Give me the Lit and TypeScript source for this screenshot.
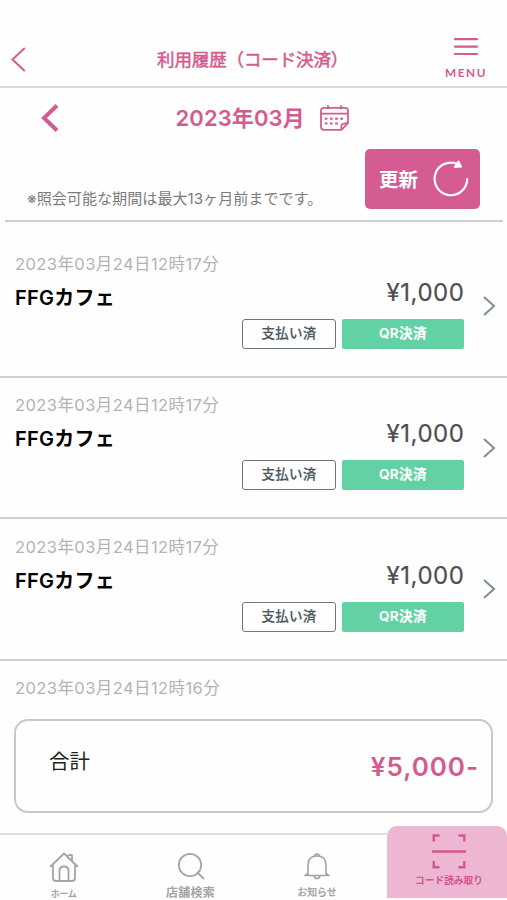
import { LitElement, html, css, svg } from "lit";
import { customElement } from "lit/decorators.js";

interface Payment {
  date: string;
  shop: string;
  amount: string;
}

const payments: Payment[] = [
  { date: "2023年03月24日12時17分", shop: "FFGカフェ", amount: "¥1,000" },
  { date: "2023年03月24日12時17分", shop: "FFGカフェ", amount: "¥1,000" },
  { date: "2023年03月24日12時17分", shop: "FFGカフェ", amount: "¥1,000" },
];

const calendarDots = [
  [4.8, 13.6], [10, 13.6], [15.2, 13.6], [20.4, 13.6],
  [4.8, 18.4], [10, 18.4], [15.2, 18.4],
];

@customElement("app-root")
export class AppRoot extends LitElement {
  static styles = css`
    :host {
      display: flex;
      flex-direction: column;
      width: 507px;
      height: 900px;
      overflow: hidden;
      background: #fefefe;
      color: #000;
      font-family: Inter, "Noto Sans CJK JP", sans-serif;
      line-height: 1;
      white-space: nowrap;
    }
    * { box-sizing: border-box; }
    svg { display: block; fill: none; flex: none; }
    .header {
      height: 88px;
      flex: none;
      padding: 36px 20px 0 11px;
      border-bottom: 2px solid #d9dadb;
      display: grid;
      grid-template-columns: 60px 1fr 43px;
      color: #d45b90;
    }
    .back { margin-top: 11px; }
    .title {
      font-size: 17.5px;
      font-weight: 400;
      padding: 14px 0 0 86px;
      font-family: "Noto Sans CJK JP", sans-serif;
      letter-spacing: -0.12px;
      -webkit-text-stroke: 0.5px currentColor;
    }
    .menu { display: flex; flex-direction: column; align-items: center; }
    .menu span {
      margin-top: 11px;
      font: 700 11.8px/12px Lato, sans-serif;
      letter-spacing: 1.5px;
      margin-right: -1px;
    }
    .month { height: 60px; flex: none; display: flex; align-items: center; color: #d45b90; padding-left: 40px; }
    .month .label { font-size: 22px; font-weight: 600; margin-left: 115.5px; width: 130.5px; letter-spacing: 0.1px; }
    .month .cal { margin-left: 14px; }
    .notice {
      height: 74px;
      flex: none;
      margin: 0 4px 0 5px;
      border-bottom: 2px solid #cfcfcf;
      display: flex;
      justify-content: space-between;
      padding: 1px 23px 0 22px;
    }
    .notice p { margin: 42px 0 0; font-size: 15.1px; color: #7b7b7b; }
    .refresh {
      width: 115px;
      height: 60px;
      border-radius: 5px;
      background: #d55c93;
      color: #fff;
      display: flex;
      align-items: center;
      justify-content: space-between;
      padding: 0 11px 0 14px;
      font-size: 19.5px;
      font-weight: 600;
    }
    .refresh span { margin-top: 3px; }
    .list { flex: none; padding-top: 14px; }
    .row {
      height: 141.6px;
      border-bottom: 2px solid #d0d0d0;
      display: grid;
      grid-template-columns: 1fr auto 43px;
      padding: 18.6px 0 0 15px;
    }
    .date { font-size: 16.5px; color: #b3b3b3; line-height: 18px; letter-spacing: 0.42px; }
    .shop { font-size: 20px; font-weight: 600; margin-top: 15px; line-height: 20px; letter-spacing: 0.25px; }
    .pay { padding-top: 24px; display: flex; flex-direction: column; align-items: flex-end; }
    .amount { font-size: 24px; line-height: 28px; color: #4e4e4e; letter-spacing: 0.55px; margin-right: -0.5px; -webkit-text-stroke: 0.2px currentColor; }
    .tags { display: flex; gap: 6px; margin-top: 12px; }
    .tag {
      height: 30px;
      border-radius: 2px;
      font-size: 13.5px;
      font-weight: 500;
      display: flex;
      align-items: center;
      justify-content: center;
      -webkit-text-stroke: 0.2px currentColor;
    }
    .paid { width: 94px; border: 1.5px solid #6c7a7d; color: #4c5a5e; background: #fff; border-radius: 3px; letter-spacing: 0.3px; }
    .qr { width: 122px; background: #62d1a3; color: #fff; font-weight: 600; letter-spacing: 0.5px; }
    .arrow { margin: 40.5px 0 0 17.5px; }
    .partial { padding: 18px 15px 0; height: 58.5px; flex: none; }
    .total {
      flex: none;
      height: 94px;
      margin: 0 14px 0 14px;
      border: 2px solid #c8c8c8;
      border-radius: 14px;
      display: flex;
      justify-content: space-between;
      padding: 31px 12px 0 33px;
    }
    .total .name { font-size: 20.5px; color: #222; }
    .total .sum { font-size: 26px; font-weight: 600; color: #d45b90; margin-top: 2px; letter-spacing: 0.95px; }
    .tabs {
      margin-top: 12.5px;
      height: 74px;
      flex: none;
      display: grid;
      grid-template-columns: 127px 127px 126px 7px 120px;
    }
    .tab {
      margin-top: 7px;
      border-top: 2px solid #dededf;
      display: flex;
      flex-direction: column;
      align-items: center;
      padding-top: 17px;
      color: #a5a5a5;
      font-weight: 600;
      font-size: 12px;
    }
    .tab span { margin-top: 5px; line-height: 12px; letter-spacing: 0.3px; }
    .line { margin-top: 7px; border-top: 2px solid #dededf; }
    .home span { font-size: 9px; letter-spacing: -0.4px; }
    .news span { font-size: 10px; letter-spacing: -0.1px; }
    .scan {
      height: 72px;
      border-radius: 10px 10px 0 0;
      background: #edb6d3;
      color: #d5558f;
      display: flex;
      flex-direction: column;
      align-items: center;
      padding: 8.5px 0 0 4px;
      font-weight: 700;
      font-size: 9.7px;
    }
    .scan span { margin-top: 5.5px; line-height: 12px; }
  `;

  render() {
    return html`
      <header class="header">
        <svg class="back" width="16" height="26" stroke="currentColor" stroke-width="2" viewBox="0 0 16 26"><path d="M13.2 1.5 1.5 12.5 13.2 23.5" stroke-linecap="round" /></svg>
        <div class="title">利用履歴（コード決済）</div>
        <div class="menu">
          <svg width="26" height="20" viewBox="0 0 26 20" stroke="currentColor" stroke-width="2.2" stroke-linecap="round"><path d="M2 3.2H24M2 10.7H24M2 18H24" /></svg>
          <span>MENU</span>
        </div>
      </header>

      <div class="month">
        <svg width="20" height="30" viewBox="0 0 20 30" stroke="currentColor" stroke-width="4"><path d="M17 2.5 4 15 17 27.5" /></svg>
        <div class="label">2023年03月</div>
        <svg class="cal" width="29" height="26" viewBox="0 0 29 26" stroke="currentColor" stroke-width="1.8" stroke-linecap="round" stroke-linejoin="round">
          <path d="M4 2.8H25Q28 2.8 28 5.8V18.2L21.5 24.8H4Q1 24.8 1 21.8V5.8Q1 2.8 4 2.8ZM1 8.6H28M8 1V3.4M21 1V3.4M21.5 24.5Q20.5 18.5 24 18.6L28 18" />
          ${calendarDots.map(([x, y]) => svg`<rect x=${x} y=${y - 1} width="2.6" height="2.2" fill="currentColor" stroke="none" />`)}
        </svg>
      </div>

      <section class="notice">
        <p>※照会可能な期間は最大13ヶ月前までです。</p>
        <div class="refresh">
          <span>更新</span>
          <svg width="36" height="38" viewBox="0 0 36 38" stroke="#fff" stroke-width="2.2" stroke-linecap="round">
            <path d="M34.2 19A16.3 16.3 0 1 1 24 3.8" />
            <path d="M25.4 1.5 28.2 6.6 21.8 7Z" fill="#fff" stroke-width="1.8" stroke-linejoin="round" />
          </svg>
        </div>
      </section>

      <main class="list">
        ${payments.map((p) => html`
          <article class="row">
            <div>
              <div class="date">${p.date}</div>
              <div class="shop">${p.shop}</div>
            </div>
            <div class="pay">
              <div class="amount">${p.amount}</div>
              <div class="tags">
                <div class="tag paid">支払い済</div>
                <div class="tag qr">QR決済</div>
              </div>
            </div>
            <svg class="arrow" width="14" height="22" viewBox="0 0 14 22" stroke="#809193" stroke-width="2.1"><path d="M2 2 12 11 2 20" /></svg>
          </article>`)}
      </main>

      <div class="partial"><div class="date">2023年03月24日12時16分</div></div>

      <section class="total">
        <div class="name">合計</div>
        <div class="sum">¥5,000-</div>
      </section>

      <nav class="tabs">
        <div class="tab home">
          <svg width="30" height="31" viewBox="0 0 30 31" stroke="currentColor" stroke-width="1.8" stroke-linecap="round" stroke-linejoin="round">
            <path d="M1.5 14.5 15 1.5 28.5 14.5M4 13V26Q4 29 7 29H23Q26 29 26 26V13M10.5 29V19Q10.5 14.5 15 14.5T19.5 19V29M18.5 4.5Q19 3 21 3H23V9" />
          </svg>
          <span>ホーム</span>
        </div>
        <div class="tab">
          <svg width="28" height="30" viewBox="0 0 28 30" stroke="currentColor" stroke-width="1.8" stroke-linecap="round"><circle cx="13" cy="13" r="11.2" /><path d="M20.5 20.5 26.5 26.5" /></svg>
          <span>店舗検索</span>
        </div>
        <div class="tab news">
          <svg width="28" height="29" viewBox="0 0 28 29" stroke="currentColor" stroke-width="1.6" stroke-linecap="round" stroke-linejoin="round">
            <path d="M2 23.5H26M5 23V13Q5 4 14 4T23 13V23M11.5 4.3Q11.5 2 14 2T16.5 4.3M11 23.5Q11.5 26.5 14 26.5T17 23.5M5 21 2 23.5M23 21 26 23.5" />
          </svg>
          <span>お知らせ</span>
        </div>
        <div class="line"></div>
        <div class="scan">
          <svg width="34" height="35" viewBox="0 0 34 35" stroke="currentColor" stroke-width="2.4">
            <path d="M1.7 7.5V1.5H7.5M26.5 1.5H32.3V7.5M1.7 27V33.2H7.5M26.5 33.2H32.3V27M0 17.5H34" />
          </svg>
          <span>コード読み取り</span>
        </div>
      </nav>
    `;
  }
}
